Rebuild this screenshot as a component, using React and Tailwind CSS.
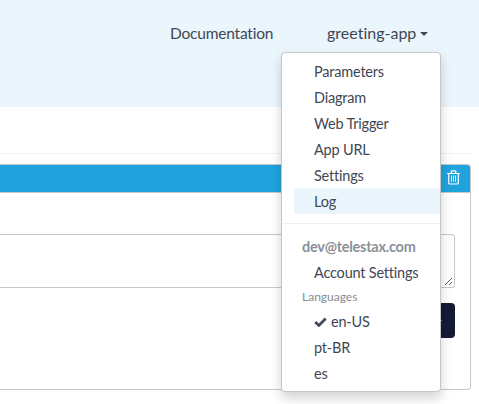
import React from 'react';

const appLinks = ['Parameters', 'Diagram', 'Web Trigger', 'App URL', 'Settings', 'Log'];

function Item({ children, active }) {
  return (
    <li className={`ml-3 h-[26px] pl-5 text-[14.5px] leading-[27px] tracking-[-0.2px] whitespace-nowrap ${active ? 'bg-[#eaf6fc]' : ''}`}>
      {children}
    </li>
  );
}

function TrashIcon() {
  return (
    <svg className="h-[15px] w-[13px]" viewBox="0 0 13 15" fill="none" stroke="white" strokeWidth="1.2">
      <path d="M0 3.5H13M4.2 3.2V1.6Q4.2 .8 5 .8H8Q8.8 .8 8.8 1.6V3.2M1.7 3.5V12.7Q1.7 14 3 14H10Q11.3 14 11.3 12.7V3.5" />
      <path d="M4.5 5.5V11.8M6.5 5.5V11.8M8.5 5.5V11.8" strokeWidth="0.9" />
    </svg>
  );
}

function Menu() {
  return (
    <div className="absolute top-[52px] left-[281px] h-[340px] w-[160px] rounded border border-[#c5c6c8] bg-white py-[5px] shadow-[0_6px_12px_rgba(0,0,0,0.175)]">
      <ul>
        {appLinks.map((label) => (
          <Item key={label} active={label === 'Log'}>{label}</Item>
        ))}
      </ul>
      <div className="my-[9px] h-px bg-[#efefef]" />
      <div className="h-[26px] pl-5 text-[14.5px] leading-[27px] font-bold tracking-[-0.25px] text-[#8b9199]">dev@telestax.com</div>
      <ul><Item>Account Settings</Item></ul>
      <div className="h-[23px] pl-5 text-[12px] leading-[23px] text-[#858b94]">Languages</div>
      <ul>
        <Item>
          <span className="flex items-center gap-[4px]">
            <svg className="h-[10px] w-[13px]" viewBox="0 0 13 10">
              <path d="M1.2 5L4.9 8.4L11.7 1.5" fill="none" stroke="#414b5d" strokeWidth="2.8" />
            </svg>
            en-US
          </span>
        </Item>
        <Item>pt-BR</Item>
        <Item>es</Item>
      </ul>
    </div>
  );
}

export default function App() {
  return (
    <div className="relative h-[404px] w-[479px] overflow-hidden bg-white font-['Lato',sans-serif] text-[#3f4754] [font-variant-ligatures:none]">
      <header className="flex h-[107px] items-start bg-[#eaf6fc] pt-[21px] pl-[170px] text-[16px] leading-[24px] whitespace-nowrap">
        <span className="w-[157px] text-[15.5px] tracking-[-0.2px]">Documentation</span>
        <span className="flex items-center gap-[4px]">
          greeting-app
          <span className="mt-px h-0 w-0 border-x-4 border-t-4 border-x-transparent border-t-[#3f4754]" />
        </span>
      </header>
      <div className="mr-[8px] h-[47px] border-b border-[#f0f0f0]" />
      <main className="mt-[10px] mr-[8px] h-[226px] rounded-r border border-l-0 border-[#c8c8c8]">
        <div className="flex h-[28px] items-center justify-end rounded-tr-[3px] border-b border-[#c8c8c8] bg-[#20a3dc] pr-[10px] pb-[2px]">
          <TrashIcon />
        </div>
        <div className="mt-[41px] mr-[15px] flex h-[54px] items-end justify-end rounded-r border border-l-0 border-[#c8c8c8] p-px">
          <svg className="h-[8px] w-[8px]" viewBox="0 0 8 8" stroke="#444" strokeWidth="0.9">
            <path d="M0 7L7 0M4 7L7 4" />
          </svg>
        </div>
        <div className="mt-[15px] mr-[15px] flex justify-end">
          <button className="flex h-[35px] w-[60px] items-center rounded bg-[#131c34] pl-[44px] text-white">
            <span className="h-px w-[3px] bg-[#7e8492]" />
          </button>
        </div>
      </main>
      <Menu />
    </div>
  );
}
